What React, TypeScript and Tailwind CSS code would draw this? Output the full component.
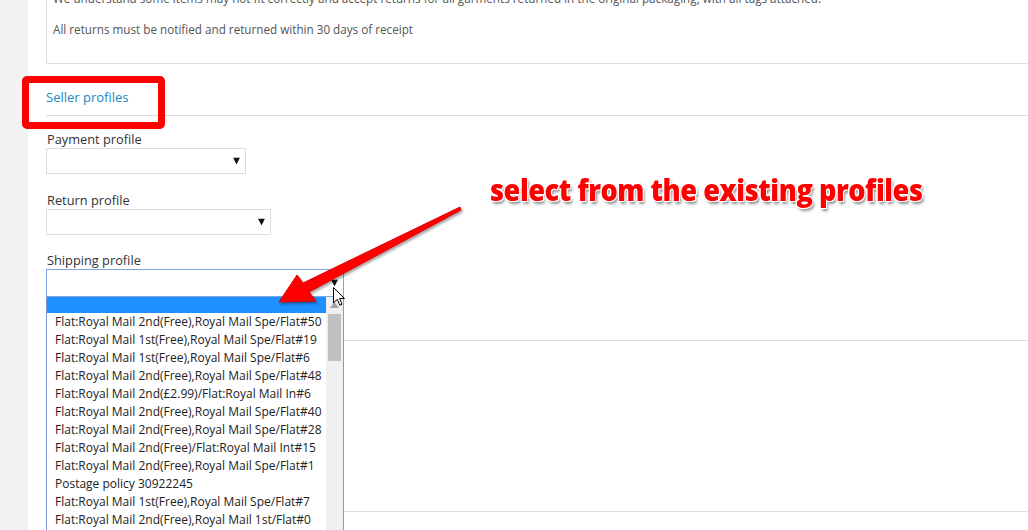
import React from 'react'

const shippingOptions = [
  'Flat:Royal Mail 2nd(Free),Royal Mail Spe/Flat#50',
  'Flat:Royal Mail 1st(Free),Royal Mail Spe/Flat#19',
  'Flat:Royal Mail 1st(Free),Royal Mail Spe/Flat#6',
  'Flat:Royal Mail 2nd(Free),Royal Mail Spe/Flat#48',
  'Flat:Royal Mail 2nd(£2.99)/Flat:Royal Mail In#6',
  'Flat:Royal Mail 2nd(Free),Royal Mail Spe/Flat#40',
  'Flat:Royal Mail 2nd(Free),Royal Mail Spe/Flat#28',
  'Flat:Royal Mail 2nd(Free)/Flat:Royal Mail Int#15',
  'Flat:Royal Mail 2nd(Free),Royal Mail Spe/Flat#1',
  'Postage policy 30922245',
  'Flat:Royal Mail 1st(Free),Royal Mail Spe/Flat#7',
  'Flat:Royal Mail 2nd(Free),Royal Mail 1st/Flat#0',
]

const Caret = () => (
  <svg width="7" height="7" viewBox="0 0 7 7" className="absolute right-[5px] top-1/2 -translate-y-1/2">
    <path d="M0 0 H7 L3.5 7 Z" fill="#111" />
  </svg>
)

function SelectBox({ width, focused }: { width: string; focused?: boolean }) {
  return (
    <div
      className={`relative bg-white border ${width} ${
        focused ? 'h-[28px] border-[#7ea6dc]' : 'h-[26px] border-[#dcdcdc]'
      }`}
    >
      <Caret />
    </div>
  )
}

function ShippingDropdown() {
  return (
    <div className="absolute left-0 top-full w-[298px] h-[236px] overflow-hidden flex bg-white border-x border-[#7a9cd3] font-['Open_Sans',sans-serif] text-[12px] text-[#222]">
      <div className="flex-1 flex flex-col">
        <div className="h-[16px] shrink-0 bg-[#1e90ff]" />
        {shippingOptions.map((opt) => (
          <div key={opt} className="h-[18px] shrink-0 leading-[18px] pl-[8px] whitespace-nowrap overflow-hidden">
            {opt}
          </div>
        ))}
      </div>
      {/* scrollbar */}
      <div className="w-[17px] bg-[#f0f0f0] flex flex-col items-center">
        <svg width="9" height="6" viewBox="0 0 9 6" className="mt-[5px]">
          <path d="M0 6 L4.5 0 L9 6 Z" fill="#a3a3a3" />
        </svg>
        <div className="mt-[6px] w-[13px] h-[47px] bg-[#c1c1c1]" />
      </div>
    </div>
  )
}

export default function App() {
  return (
    <div className="relative w-[1028px] h-[530px] overflow-hidden flex bg-white font-['Open_Sans',sans-serif]">
      <div className="w-[28px] shrink-0 bg-[#f2f2f2]" />

      <div className="flex-1 pl-[18px] flex flex-col">
        {/* return policy text box (scrolled partly out of view) */}
        <div className="-mt-[16px] h-[80px] shrink-0 border-l border-b border-[#dcdcdc] pt-[5px] px-[6px] text-[11.7px] text-[#555]">
          <p className="leading-[18px] whitespace-nowrap">
            We understand some items may not fit correctly and accept returns for all garments returned in the original packaging, with all tags attached.
          </p>
          <p className="mt-[13px] leading-[18px]">All returns must be notified and returned within 30 days of receipt</p>
        </div>

        {/* Seller profiles header */}
        <div className="relative h-[52px] shrink-0 flex items-end pb-[9px] border-b border-[#dcdcdc]">
          <span className="text-[13px] leading-[18px] text-[#1a87c4]">Seller profiles</span>
          <div className="absolute -left-[24px] top-[12px] w-[143px] h-[53px] border-[7px] border-[#ff0000] rounded-[5px]" />
        </div>

        {/* form fields */}
        <div className="flex flex-col text-[12.8px] text-[#333] pl-[1px]">
          <label className="mt-[15px] leading-[17px]">Payment profile</label>
          <div className="-ml-[1px]">
            <SelectBox width="w-[200px]" />
          </div>

          <label className="mt-[18px] leading-[17px]">Return profile</label>
          <div className="-ml-[1px]">
            <SelectBox width="w-[225px]" />
          </div>

          <label className="mt-[17px] leading-[17px]">Shipping profile</label>
          <div className="-ml-[1px] relative z-10">
            <SelectBox width="w-[298px]" focused />
            <ShippingDropdown />
          </div>
        </div>

        <div className="h-[44px] shrink-0 border-b border-[#dcdcdc]" />
        <div className="h-[171px] shrink-0 border-b border-[#dcdcdc]" />
      </div>

      {/* annotation: text */}
      <div className="absolute left-[490px] top-[170px] z-20 origin-left scale-x-[0.905] whitespace-nowrap font-['Open_Sans',sans-serif] font-extrabold text-[30px] leading-[40px] text-[#ff0000] tracking-[-0.5px] [text-shadow:0_0_2px_#fff,1px_1px_0_#fff,-1px_-1px_0_#fff,1px_-1px_0_#fff,-1px_1px_0_#fff,2px_3px_3px_rgba(0,0,0,0.45)]">
        select from the existing profiles
      </div>

      {/* annotation: arrow */}
      <svg className="absolute inset-0 z-20 pointer-events-none" width="1028" height="530" viewBox="0 0 1028 530">
        <defs>
          <filter id="arrowShadow" x="-10%" y="-10%" width="130%" height="130%">
            <feDropShadow dx="1.5" dy="2" stdDeviation="1.2" floodColor="#000" floodOpacity="0.35" />
          </filter>
        </defs>
        <path
          d="M279 302 L297 275 L303 283 L460 207 L461 210 L309 292 L316 301 Z"
          fill="#f00"
          stroke="#e00000"
          strokeWidth="1"
          strokeLinejoin="round"
          filter="url(#arrowShadow)"
        />
      </svg>

      {/* mouse cursor */}
      <svg className="absolute left-[333px] top-[287px] z-30" width="13" height="20" viewBox="0 0 13 20">
        <path d="M0.5 0.5 L0.5 16 L4.3 12.3 L6.8 18.3 L9 17.3 L6.6 11.5 L11.5 11.5 Z" fill="#fff" stroke="#000" strokeWidth="1" strokeLinejoin="round" />
      </svg>
    </div>
  )
}
